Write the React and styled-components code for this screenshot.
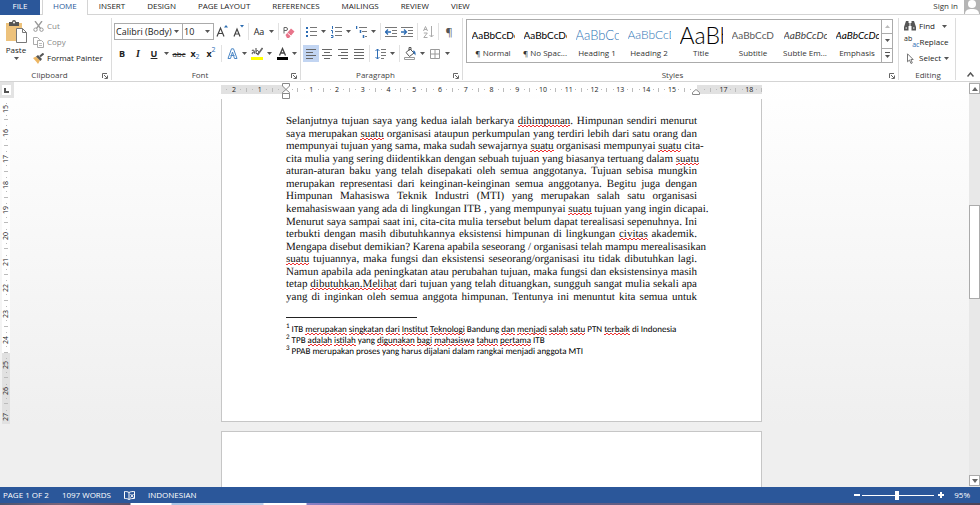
import React, { useState } from 'react';
import styled, { createGlobalStyle, css } from 'styled-components';

const tabs = ['HOME', 'INSERT', 'DESIGN', 'PAGE LAYOUT', 'REFERENCES', 'MAILINGS', 'REVIEW', 'VIEW'];

const styleList = [
  { name: '¶ Normal', sample: 'AaBbCcDc', kind: 'normal' },
  { name: '¶ No Spac...', sample: 'AaBbCcDc', kind: 'normal' },
  { name: 'Heading 1', sample: 'AaBbCc', kind: 'heading1' },
  { name: 'Heading 2', sample: 'AaBbCcD', kind: 'heading2' },
  { name: 'Title', sample: 'AaBb', kind: 'title' },
  { name: 'Subtitle', sample: 'AaBbCcD', kind: 'subtitle' },
  { name: 'Subtle Em...', sample: 'AaBbCcDc', kind: 'subtle' },
  { name: 'Emphasis', sample: 'AaBbCcDc', kind: 'emphasis' },
];

// words between underscores get the spelling underline
const bodyLines = [
  'Selanjutnya tujuan saya yang kedua ialah berkarya _dihimpunan_. Himpunan sendiri menurut',
  'saya merupakan _suatu_ organisasi ataupun perkumpulan yang terdiri lebih dari satu orang dan',
  'mempunyai tujuan yang sama, maka sudah sewajarnya _suatu_ organisasi mempunyai _suatu_ cita-',
  'cita mulia yang sering diidentikkan dengan sebuah tujuan yang biasanya tertuang dalam _suatu_',
  'aturan-aturan baku yang telah disepakati oleh semua anggotanya. Tujuan sebisa mungkin',
  'merupakan representasi dari keinginan-keinginan semua anggotanya. Begitu juga dengan',
  'Himpunan Mahasiswa Teknik Industri (MTI) yang merupakan salah satu organisasi',
  'kemahasiswaan yang ada di lingkungan ITB , yang mempunyai _suatu_ tujuan yang ingin dicapai.',
  'Menurut saya sampai saat ini, cita-cita mulia tersebut belum dapat terealisasi sepenuhnya. Ini',
  'terbukti dengan masih dibutuhkannya eksistensi himpunan di lingkungan _civitas_ akademik.',
  'Mengapa disebut demikian? Karena apabila seseorang / organisasi telah mampu merealisasikan',
  '_suatu_ tujuannya, maka fungsi dan eksistensi seseorang/organisasi itu tidak dibutuhkan lagi.',
  'Namun apabila ada peningkatan atau perubahan tujuan, maka fungsi dan eksistensinya masih',
  'tetap _dibutuhkan.Melihat_ dari tujuan yang telah dituangkan, sungguh sangat mulia sekali apa',
  'yang di inginkan oleh semua anggota himpunan. Tentunya ini menuntut kita semua untuk',
];

const notes = [
  'ITB _merupakan_ _singkatan_ _dari_ _Institut_ _Teknologi_ Bandung _dan_ _menjadi_ _salah_ _satu_ PTN _terbaik_ di Indonesia',
  'TPB _adalah_ _istilah_ yang _digunakan_ _bagi_ _mahasiswa_ _tahun_ _pertama_ ITB',
  'PPAB merupakan proses yang harus dijalani dalam rangkai menjadi anggota MTI',
];

const rulerMarks = Array.from({ length: 21 }, (_, i) => i - 2);
const sideMarks = Array.from({ length: 13 }, (_, i) => i + 15);

const Marked = ({ text }) =>
  text.split('_').map((part, i) => (i % 2 ? <Misspelt key={i}>{part}</Misspelt> : part));

const Svg = ({ w, h, children }) => (
  <svg width={w} height={h} viewBox={`0 0 ${w} ${h}`} fill="none" aria-hidden="true">
    {children}
  </svg>
);

const Caret = () => (
  <Svg w={5} h={3}>
    <path d="M0 0h5L2.5 3z" fill="#555" />
  </Svg>
);

const Launcher = ({ label }) => (
  <LaunchButton aria-label={label}>
    <Svg w={6} h={6}>
      <path d="M.5 5V.5H5M2 2l3 3M5.500 2.500v3h-3" stroke="#666" />
    </Svg>
  </LaunchButton>
);

const PasteIcon = () => (
  <Svg w={22} h={23}>
    <path d="M1 3h16v18H1z" fill="#edc27c" />
    <path d="M4 2h3a2 2 0 0 1 4 0h3v4H4z" fill="#555" />
    <circle cx="9" cy="2.500" r="1" fill="#fff" />
    <path d="M11.500 8.500h6l4 4v10h-10z" fill="#fff" stroke="#777" />
    <path d="M17.500 8.500v4h4" stroke="#777" />
  </Svg>
);

const CutIcon = () => (
  <Svg w={11} h={11}>
    <path d="M2 0l5.500 7.500M9 0L3.500 7.500" stroke="#999" strokeWidth="1.300" />
    <circle cx="2.500" cy="8.700" r="1.700" stroke="#999" />
    <circle cx="8.500" cy="8.700" r="1.700" stroke="#999" />
  </Svg>
);

const CopyIcon = () => (
  <Svg w={11} h={11}>
    <path d="M.5.5h4l2 2v5h-6z" fill="#fff" stroke="#aaa" />
    <path d="M4.500 3.500h4l2 2v5h-6z" fill="#fff" stroke="#aaa" />
    <path d="M6 6.500h3M6 8.500h3" stroke="#bbb" />
  </Svg>
);

const PainterIcon = () => (
  <Svg w={11} h={11}>
    <path d="M0 5l3-1.500 4 4L5 11 3.500 9z" fill="#edb662" />
    <path d="M3 3.500l2-1.500 4 4-1.500 2z" fill="#555" />
    <path d="M7 3.500L10.500.5" stroke="#555" strokeWidth="2" />
  </Svg>
);

const GrowIcon = ({ down }) => (
  <Svg w={12} h={13}>
    <path d={down ? 'M2 11.500L5 4l3 7.500M3.200 9h3.600' : 'M1 11.500L4.500 3 8 11.500M2.300 8.500h4.400'} stroke="#444" strokeWidth="1.200" />
    <path d={down ? 'M8 0h4l-2 2.500z' : 'M8 2.500h4L10 0z'} fill="#2b6cb0" />
  </Svg>
);

const EraserIcon = () => (
  <Svg w={12} h={12}>
    <path d="M1 7.500V1.500h2a1.500 1.500 0 0 1 0 3H1" stroke="#666" />
    <path d="M2.500 9L8 2.500 11.500 5.500 6 12H4z" fill="#e8748a" />
    <path d="M4.500 7l3.500 3" stroke="#fff" />
  </Svg>
);

const EffectIcon = () => (
  <Svg w={11} h={11}>
    <path d="M1 10.500L4.500.8h2L10 10.500H7.500L5.500 4 3.500 10.500z" stroke="#4a86c5" fill="#fff" strokeLinejoin="round" />
    <path d="M3.500 7.500h4" stroke="#4a86c5" />
  </Svg>
);

const MarkerIcon = () => (
  <Svg w={12} h={13}>
    <path d="M.8 3.500c2-1 2.500 0 2.500 1.200v2M3.300 5C.5 5 .5 7 2 6.800M5 1v5.500c2 .8 3-.5 2.500-2S6 3.500 5 4.500" stroke="#444" />
    <path d="M11.500 1L6.500 8" stroke="#666" strokeWidth="1.600" />
    <path d="M0 10h12v3H0z" fill="#ff0" />
  </Svg>
);

const FontColorIcon = () => (
  <Svg w={11} h={13}>
    <path d="M2.500 8.500l3-7 3 7M3.500 6h4" stroke="#444" strokeWidth="1.300" />
    <path d="M0 10h11v3H0z" fill="#000" />
  </Svg>
);

const ListIcon = ({ kind }) => (
  <Svg w={11} h={12}>
    {kind === 'bullet' && <path d="M0 1h2v2H0zM0 5h2v2H0zM0 9h2v2H0z" fill="#2e6db4" />}
    {kind === 'number' && <path d="M1.500 0v3M0 4.500h1.500v3M0 9.500h2v2H0" stroke="#2e6db4" />}
    {kind === 'level' && <path d="M.5 0v3M4.500 4v3M7.500 9v3" stroke="#2e6db4" strokeWidth="1.500" />}
    <path
      d={kind === 'level' ? 'M3 1.500h8M6 5.500h5M9 10.500h2' : 'M4 1.500h7M4 5.500h7M4 9.500h7'}
      stroke="#777"
    />
  </Svg>
);

const IndentIcon = ({ out }) => (
  <Svg w={12} h={10}>
    <path d="M0 .5h12M7 3.500h5M7 6.500h5M0 9.500h12" stroke="#777" />
    <path d={out ? 'M0 5h6M3 2.500L.5 5 3 7.500' : 'M0 5h5M3 2.500L5.500 5 3 7.500'} stroke="#2e6db4" strokeWidth="1.300" />
  </Svg>
);

const SortIcon = () => (
  <Svg w={11} h={12}>
    <path d="M.5 5L2.500.5 4.500 5M1 3.500h3M.8 7h3.500L.8 11.500h3.700" stroke="#aaa" />
    <path d="M8.500 0v11M6.500 9l2 2 2-2" stroke="#aaa" />
  </Svg>
);

const alignPaths = {
  left: 'M0 .5h10M0 3.500h7M0 6.500h10M0 9.500h7',
  center: 'M0 .5h10M2 3.500h6M0 6.500h10M2 9.500h6',
  right: 'M0 .5h10M3 3.500h7M0 6.500h10M3 9.500h7',
  justify: 'M0 .5h10M0 3.500h10M0 6.500h10M0 9.500h10',
};

const AlignIcon = ({ side }) => (
  <Svg w={10} h={10}>
    <path d={alignPaths[side]} stroke="#666" />
  </Svg>
);

const SpacingIcon = () => (
  <Svg w={11} h={12}>
    <path d="M2.500 1v10M.5 3l2-2 2 2M.5 9l2 2 2-2" stroke="#2e6db4" />
    <path d="M6 1.500h5M6 4.500h5M6 7.500h5M6 10.500h3" stroke="#777" />
  </Svg>
);

const BucketIcon = () => (
  <Svg w={13} h={13}>
    <path d="M2 5.500L6 2l4 4-4.500 3.500z" stroke="#555" fill="#fff" />
    <path d="M5 4V.5h2V3" stroke="#555" />
    <path d="M9 3.500c2 0 3 1.500 2.500 5L9.500 6z" fill="#2e6db4" />
    <path d="M.5 10.500h10v2H.5z" stroke="#999" fill="#fff" />
  </Svg>
);

const BorderIcon = () => (
  <Svg w={10} h={10}>
    <path d="M.5.5h9v9h-9zM5 1v8M1 5h8" stroke="#999" />
  </Svg>
);

const FindIcon = () => (
  <Svg w={12} h={10}>
    <path d="M2 0h2.500v2H7.500V0H10l2 6v3.500H7.500V5h-3v4.500H0V6z" fill="#555" />
    <path d="M1.500 7h1.500M9 7h1.500M6 2v3" stroke="#fff" />
  </Svg>
);

const SelectIcon = () => (
  <Svg w={8} h={11}>
    <path d="M1.500.8v8l2-1.800 1.500 3.500 1.300-.6L4.900 6.500h2.300z" fill="#fff" stroke="#777" />
  </Svg>
);

const ReplaceIcon = () => (
  <ReplaceBox>
    <span>ab</span>
    <em>ac</em>
  </ReplaceBox>
);

const ProofIcon = () => (
  <Svg w={11} h={9}>
    <path d="M5 1.500C3.500.5 2 .5.5.5v7c1.500 0 3 0 4.500 1zM5 1.500C6.500.5 9 .5 10.500.5v7c-2 0-4 0-5.500 1" stroke="#fff" />
    <path d="M6.500 3l3 3.500M9.500 3l-3 3.500" stroke="#fff" />
  </Svg>
);

const IndentMarker = () => (
  <LeftMarker>
    <Svg w={8} h={16}>
      <path d="M.5.5h7v2.500L4 6.500.5 3zM.5 10.500v-1L4 6.500l3.500 3v1zM.5 10.500h7v5h-7z" fill="#fff" stroke="#888" />
    </Svg>
  </LeftMarker>
);

const Split = ({ label, children }) => (
  <Tool $split aria-label={label}>
    <Glyph>{children}</Glyph>
    <Caret />
  </Tool>
);

const App = () => {
  const [font, setFont] = useState('Calibri (Body)');
  const [size, setSize] = useState('10');
  const [align, setAlign] = useState('left');
  const [zoom, setZoom] = useState(95);

  return (
    <Window>
      <GlobalStyle />
      <TabStrip>
        <FileTab>FILE</FileTab>
        {tabs.map((tab) => (
          <Tab key={tab} $active={tab === 'HOME'}>{tab}</Tab>
        ))}
        <SignIn href="#signin">Sign in</SignIn>
        <Avatar>
          <Svg w={16} h={14}>
            <circle cx="8" cy="4" r="4" fill="#fff" />
            <path d="M1 14c0-4 3-5 7-5s7 1 7 5z" fill="#fff" />
          </Svg>
        </Avatar>
      </TabStrip>

      <Ribbon>
        <Group $width={112}>
          <ClipboardTools>
            <PasteButton>
              <PasteIcon />
              Paste
              <Caret />
            </PasteButton>
            <Stack>
              <TextTool $muted><CutIcon />Cut</TextTool>
              <TextTool $muted><CopyIcon />Copy</TextTool>
              <TextTool><PainterIcon />Format Painter</TextTool>
            </Stack>
          </ClipboardTools>
          <GroupLabel>Clipboard</GroupLabel>
          <Launcher label="Clipboard options" />
        </Group>

        <Group $width={189}>
          <ToolRows>
            <ToolRow>
              <SelectBox $width={69}>
                <Select aria-label="Font" value={font} onChange={(e) => setFont(e.target.value)}>
                  <option>Calibri (Body)</option>
                  <option>Times New Roman</option>
                </Select>
                <Caret />
              </SelectBox>
              <SelectBox $width={31}>
                <Select aria-label="Font size" value={size} onChange={(e) => setSize(e.target.value)}>
                  <option>10</option>
                  <option>12</option>
                </Select>
                <Caret />
              </SelectBox>
              <Tool aria-label="Grow font"><GrowIcon /></Tool>
              <Tool aria-label="Shrink font"><GrowIcon down /></Tool>
              <Divider />
              <Split label="Change case">Aa</Split>
              <Divider />
              <Tool aria-label="Clear formatting"><EraserIcon /></Tool>
            </ToolRow>
            <ToolRow>
              <Tool><b>B</b></Tool>
              <Tool><Italic>I</Italic></Tool>
              <Split label="Underline"><Underlined>U</Underlined></Split>
              <Tool><Struck>abc</Struck></Tool>
              <Tool><b>x</b><Sub>2</Sub></Tool>
              <Tool><b>x</b><Sup>2</Sup></Tool>
              <Divider />
              <Split label="Text effects"><EffectIcon /></Split>
              <Split label="Highlight"><MarkerIcon /></Split>
              <Split label="Font colour"><FontColorIcon /></Split>
            </ToolRow>
          </ToolRows>
          <GroupLabel>Font</GroupLabel>
          <Launcher label="Font options" />
        </Group>

        <Group $width={162}>
          <ToolRows>
            <ToolRow>
              <Split label="Bullets"><ListIcon kind="bullet" /></Split>
              <Split label="Numbering"><ListIcon kind="number" /></Split>
              <Split label="Multilevel list"><ListIcon kind="level" /></Split>
              <Divider />
              <Tool aria-label="Decrease indent"><IndentIcon out /></Tool>
              <Tool aria-label="Increase indent"><IndentIcon /></Tool>
              <Divider />
              <Tool aria-label="Sort"><SortIcon /></Tool>
              <Divider />
              <Tool><Pilcrow>¶</Pilcrow></Tool>
            </ToolRow>
            <ToolRow>
              {Object.keys(alignPaths).map((side) => (
                <Tool key={side} aria-label={side} $on={align === side} onClick={() => setAlign(side)}>
                  <AlignIcon side={side} />
                </Tool>
              ))}
              <Divider />
              <Split label="Line spacing"><SpacingIcon /></Split>
              <Divider />
              <Split label="Shading"><BucketIcon /></Split>
              <Split label="Borders"><BorderIcon /></Split>
            </ToolRow>
          </ToolRows>
          <GroupLabel>Paragraph</GroupLabel>
          <Launcher label="Paragraph options" />
        </Group>

        <StylesGroup>
          <Gallery>
            <GalleryItems>
              {styleList.map((item) => (
                <StyleItem key={item.name}>
                  <Sample $kind={item.kind}>{item.sample}</Sample>
                  <StyleName>{item.name}</StyleName>
                </StyleItem>
              ))}
            </GalleryItems>
            <GalleryScroll>
              <ScrollStep aria-label="Previous styles"><Svg w={5} h={3}><path d="M0 3h5L2.500 0z" fill="#bbb" /></Svg></ScrollStep>
              <ScrollStep aria-label="Next styles"><Caret /></ScrollStep>
              <ScrollStep aria-label="More styles">
                <Svg w={5} h={6}><path d="M0 .5h5" stroke="#555" /><path d="M0 3h5L2.500 6z" fill="#555" /></Svg>
              </ScrollStep>
            </GalleryScroll>
          </Gallery>
          <GroupLabel>Styles</GroupLabel>
          <Launcher label="Styles options" />
        </StylesGroup>

        <Group $width={57}>
          <Stack>
            <TextTool><FindIcon />Find<CaretGap><Caret /></CaretGap></TextTool>
            <TextTool $tight><ReplaceIcon />Replace</TextTool>
            <TextTool><IconSlot><SelectIcon /></IconSlot>Select<Caret /></TextTool>
          </Stack>
          <GroupLabel $plain>Editing</GroupLabel>
        </Group>
        <Collapse aria-label="Collapse the ribbon">
          <Svg w={7} h={5}><path d="M.5 4.500l3-3.500 3 3.500" stroke="#555" strokeWidth="1.500" /></Svg>
        </Collapse>
      </Ribbon>

      <Workspace>
        <SideColumn>
          <TabSelector aria-label="Tab stop">
            <Svg w={5} h={5}><path d="M1 0v4h4" stroke="#555" strokeWidth="2" /></Svg>
          </TabSelector>
          <SideRuler>
            <SideScale>
              {sideMarks.map((mark) => (
                <SideCell key={mark} $margin={mark > 24}><span>{mark}</span></SideCell>
              ))}
            </SideScale>
          </SideRuler>
        </SideColumn>

        <Canvas>
          <Ruler>
            {rulerMarks.map((mark) => (
              <RulerCell key={mark}>{mark === 0 || mark === 16 ? '' : Math.abs(mark)}</RulerCell>
            ))}
            <IndentMarker />
            <RightMarker>
              <Svg w={8} h={6}><path d="M.5 5.500V3.500L4 .5l3.500 3v2z" fill="#fff" stroke="#888" /></Svg>
            </RightMarker>
          </Ruler>
          <Pages>
            <Paper>
              <Body>
                {bodyLines.map((line) => (
                  <Line key={line}><Marked text={line} /></Line>
                ))}
              </Body>
              <NoteRule />
              <Notes>
                {notes.map((note, index) => (
                  <Note key={note}><NoteNumber>{index + 1}</NoteNumber> <Marked text={note} /></Note>
                ))}
              </Notes>
            </Paper>
            <NextPaper />
          </Pages>
        </Canvas>

        <Scrollbar>
          <ArrowButton aria-label="Scroll up"><Svg w={6} h={4}><path d="M0 4h6L3 0z" fill="#666" /></Svg></ArrowButton>
          <Track><Thumb /></Track>
          <ArrowButton aria-label="Scroll down"><Svg w={6} h={4}><path d="M0 0h6L3 4z" fill="#666" /></Svg></ArrowButton>
        </Scrollbar>
      </Workspace>

      <StatusBar>
        <span>PAGE 1 OF 2</span>
        <span>1097 WORDS</span>
        <ProofIcon />
        <span>INDONESIAN</span>
        <ZoomArea>
          <ZoomButton aria-label="Zoom out" onClick={() => setZoom(zoom - 5)}>
            <Svg w={6} h={6}><path d="M0 3h6" stroke="#fff" strokeWidth="2" /></Svg>
          </ZoomButton>
          <ZoomSlider
            type="range"
            aria-label="Zoom"
            min="0"
            max="200"
            value={zoom}
            onChange={(e) => setZoom(Number(e.target.value))}
          />
          <ZoomButton aria-label="Zoom in" onClick={() => setZoom(zoom + 5)}>
            <Svg w={6} h={6}><path d="M0 3h6M3 0v6" stroke="#fff" strokeWidth="2" /></Svg>
          </ZoomButton>
          <ZoomValue>{zoom}%</ZoomValue>
        </ZoomArea>
      </StatusBar>
      <Taskbar />
    </Window>
  );
};

const GlobalStyle = createGlobalStyle`
  * {
    box-sizing: border-box;
  }

  body {
    margin: 0;
    overflow: hidden;
  }

  button, select {
    margin: 0;
    padding: 0;
    border: none;
    background: none;
    color: inherit;
    font: inherit;
  }

  svg {
    display: block;
    flex: none;
  }
`;

const Window = styled.div`
  display: flex;
  flex-direction: column;
  height: 100vh;
  background: #fff;
  color: #222;
  font-family: 'Open Sans', 'Noto Sans', sans-serif;
  font-size: 8px;
  line-height: 10px;
  white-space: nowrap;
`;

const TabStrip = styled.nav`
  display: flex;
  height: 15px;
  border-bottom: 1px solid #d4d4d4;
`;

const FileTab = styled.button`
  width: 40px;
  height: 15px;
  padding-bottom: 3px;
  margin-right: 2px;
  background: #2b579a;
  color: #fff;
`;

const Tab = styled.button`
  height: 15px;
  padding: 0 10px 3px;
  border: solid transparent;
  border-width: 0 1px;
  ${({ $active }) => $active && css`
    background: #fff;
    border-color: #d4d4d4;
    color: #2b579a;
  `}
`;

const SignIn = styled.a`
  margin-left: auto;
  padding-top: 1px;
  color: #333;
  text-decoration: none;
`;

const Avatar = styled.div`
  width: 16px;
  margin-left: 6px;
  background: #b5b5b5;
  overflow: hidden;
`;

const Ribbon = styled.div`
  display: flex;
  height: 67px;
  border-bottom: 1px solid #d4d4d4;
`;

const Group = styled.section`
  position: relative;
  display: flex;
  flex-direction: column;
  flex: none;
  width: ${({ $width }) => $width}px;
  margin: 3px 0 1px;
  padding-left: 2px;
  border-right: 1px solid #dcdcdc;
`;

const StylesGroup = styled(Group)`
  flex: 1;
  width: auto;
  min-width: 0;
  padding: 0 5px 0 3px;
`;

const GroupLabel = styled.div`
  margin-top: auto;
  padding-right: ${({ $plain }) => ($plain ? 0 : 14)}px;
  text-align: center;
  color: #444;
`;

const LaunchButton = styled.button`
  position: absolute;
  right: 3px;
  bottom: 1px;
`;

const ClipboardTools = styled.div`
  display: flex;
`;

const PasteButton = styled.button`
  display: flex;
  flex-direction: column;
  align-items: center;
  gap: 2px;
  width: 28px;
  padding-top: 2px;
`;

const Stack = styled.div`
  display: flex;
  flex-direction: column;
  align-items: flex-start;
  padding-left: 3px;
`;

const TextTool = styled.button`
  display: flex;
  align-items: center;
  gap: ${({ $tight }) => ($tight ? 0 : 3)}px;
  height: 16px;
  color: ${({ $muted }) => ($muted ? '#888' : 'inherit')};
`;

const CaretGap = styled.span`
  padding-left: 4px;
`;

const IconSlot = styled.span`
  display: flex;
  justify-content: center;
  width: 12px;
`;

const ReplaceBox = styled.span`
  display: flex;
  height: 14px;
  font-size: 7px;
  line-height: 8px;

  em {
    align-self: flex-end;
    color: #2e6db4;
    font-style: normal;
  }
`;

const ToolRows = styled.div`
  display: flex;
  flex-direction: column;
  gap: 5px;
  padding-top: 5px;
`;

const ToolRow = styled.div`
  display: flex;
  height: 17px;
`;

const Tool = styled.button`
  display: flex;
  align-items: center;
  justify-content: ${({ $split }) => ($split ? 'flex-start' : 'center')};
  flex: none;
  width: ${({ $split }) => ($split ? 25 : 16)}px;
  background: ${({ $on }) => ($on ? '#c2d5f2' : 'none')};
  font-size: 9px;
`;

const Glyph = styled.span`
  display: flex;
  justify-content: center;
  width: 16px;
  margin-right: 2px;
`;

const Divider = styled.span`
  flex: none;
  width: 1px;
  margin: 0 2px;
  background: #e1e1e1;
`;

const SelectBox = styled.span`
  display: flex;
  align-items: center;
  flex: none;
  width: ${({ $width }) => $width}px;
  padding: 0 3px 0 1px;
  border: 1px solid #ababab;

  & + & {
    border-left: none;
  }
`;

const Select = styled.select`
  flex: 1;
  min-width: 0;
  appearance: none;
  font-size: 9px;
  color: #222;
`;

const Italic = styled.i`
  font-family: 'Liberation Serif', serif;
  font-weight: bold;
  font-size: 10px;
`;

const Underlined = styled.b`
  text-decoration: underline;
`;

const Struck = styled.span`
  font-size: 8px;
  text-decoration: line-through;
`;

const Sub = styled.sub`
  align-self: flex-end;
  font-size: 7px;
  color: #2e6db4;
`;

const Sup = styled.sup`
  align-self: flex-start;
  font-size: 7px;
  color: #2e6db4;
`;

const Pilcrow = styled.span`
  font-size: 11px;
  color: #555;
`;

const Gallery = styled.div`
  display: flex;
  height: 44px;
  margin-top: 1px;
  border: 1px solid #ababab;
`;

const GalleryItems = styled.div`
  display: flex;
  flex: 1;
  min-width: 0;
  overflow: hidden;
`;

const StyleItem = styled.button`
  display: flex;
  flex-direction: column;
  align-items: center;
  flex: none;
  width: 52px;
  padding-top: 2px;
`;

const sampleKinds = {
  normal: css`
    color: #000;
  `,
  heading1: css`
    color: #2e74b5;
    font-weight: 300;
    font-size: 13px;
  `,
  heading2: css`
    color: #2e74b5;
    font-weight: 300;
    font-size: 12px;
  `,
  title: css`
    color: #000;
    font-weight: 300;
    font-size: 23px;
  `,
  subtitle: css`
    color: #5a5a5a;
    font-size: 10px;
  `,
  subtle: css`
    color: #404040;
    font-style: italic;
  `,
  emphasis: css`
    color: #000;
    font-style: italic;
  `,
};

const Sample = styled.span`
  width: 43px;
  overflow: hidden;
  font-family: Lato, sans-serif;
  font-size: 10px;
  line-height: 26px;
  text-align: left;
  ${({ $kind }) => sampleKinds[$kind]}
`;

const StyleName = styled.span`
  color: #333;
`;

const GalleryScroll = styled.div`
  display: flex;
  flex-direction: column;
  width: 11px;
  border-left: 1px solid #ababab;
`;

const ScrollStep = styled.button`
  display: flex;
  align-items: center;
  justify-content: center;
  flex: 1;

  & + & {
    border-top: 1px solid #ababab;
  }
`;

const Collapse = styled.button`
  display: flex;
  align-items: flex-end;
  justify-content: center;
  width: 24px;
  padding: 0 0 4px 4px;
`;

const Workspace = styled.main`
  display: flex;
  flex: 1;
  min-height: 0;
  background: linear-gradient(#fff, #efefef 85%);
`;

const SideColumn = styled.div`
  display: flex;
  flex-direction: column;
  width: 14px;
`;

const TabSelector = styled.button`
  display: flex;
  align-items: center;
  justify-content: center;
  height: 16px;
  border: 2px solid #e3e3e3;
  border-width: 3px 3px 3px 2px;
  background: #fff;
`;

const SideRuler = styled.div`
  width: 8px;
  height: 325px;
  margin: 1px 0 0 2px;
  overflow: hidden;
`;

const SideScale = styled.div`
  display: grid;
  grid-template-rows: 21px repeat(12, 1fr);
  height: 331px;
`;

const SideCell = styled.div`
  display: flex;
  align-items: center;
  justify-content: center;
  background:
    linear-gradient(#bbb, #bbb) 50% 100% / 4px 1px no-repeat,
    linear-gradient(#bbb, #bbb) 50% 22% / 1px 1px no-repeat,
    linear-gradient(#bbb, #bbb) 50% 78% / 1px 1px no-repeat,
    ${({ $margin }) => ($margin ? '#e1e1e1' : '#fff')};

  span {
    writing-mode: vertical-rl;
    transform: rotate(180deg);
    font-size: 7px;
    line-height: 8px;
  }
`;

const Canvas = styled.div`
  display: flex;
  flex-direction: column;
  align-items: center;
  flex: 1;
  min-width: 0;
`;

const Ruler = styled.div`
  position: relative;
  display: flex;
  width: 541px;
  height: 9px;
  margin: 3px 0 5px;
  background: linear-gradient(90deg, #e1e1e1 66px, #fff 66px, #fff 476px, #e1e1e1 476px);
`;

const RulerCell = styled.span`
  flex: 1;
  font-size: 7px;
  line-height: 9px;
  text-align: center;
  background:
    linear-gradient(#bbb, #bbb) 100% 50% / 1px 4px no-repeat,
    linear-gradient(#bbb, #bbb) 22% 50% / 1px 1px no-repeat,
    linear-gradient(#bbb, #bbb) 78% 50% / 1px 1px no-repeat;
`;

const LeftMarker = styled.span`
  position: absolute;
  left: 61px;
  top: -2px;
`;

const RightMarker = styled.span`
  position: absolute;
  left: 471px;
  bottom: -1px;
`;

const Pages = styled.div`
  flex: 1;
  width: 541px;
  overflow: hidden;
`;

const Paper = styled.article`
  height: 323px;
  padding: 16px 64px 0;
  background: #fff;
  border: 1px solid #c6c6c6;
  border-top: none;
  color: #111;
  text-rendering: geometricPrecision;
`;

const NextPaper = styled.article`
  height: 700px;
  margin-top: 9px;
  background: #fff;
  border: 1px solid #c6c6c6;
`;

const Body = styled.div`
  display: flex;
  flex-direction: column;
  justify-content: space-between;
  height: 188px;
  font-family: 'Liberation Serif', serif;
  font-size: 11px;
`;

const Line = styled.div`
  line-height: 12px;
  text-align: justify;
  text-align-last: justify;
`;

const Misspelt = styled.span`
  background:
    linear-gradient(90deg, #e33 50%, transparent 50%) 0 100% / 4px 1px repeat-x,
    linear-gradient(90deg, transparent 50%, #e33 50%) 0 calc(100% - 1px) / 4px 1px repeat-x;
`;

const NoteRule = styled.hr`
  width: 131px;
  height: 1px;
  margin: 14px 0 5px;
  border: none;
  background: #222;
`;

const Notes = styled.div`
  font-family: Carlito, Lato, sans-serif;
  font-size: 9px;
  line-height: 11px;
  color: #000;
`;

const Note = styled.div`
  height: 11px;
`;

const NoteNumber = styled.sup`
  font-size: 7px;
  line-height: 6px;
`;

const Scrollbar = styled.div`
  display: flex;
  flex-direction: column;
  width: 11px;
  padding: 1px 0;
  background: #e8e8e8;
`;

const ArrowButton = styled.button`
  display: flex;
  align-items: center;
  justify-content: center;
  height: 11px;
  border: 1px solid #ababab;
  background: #fff;
`;

const Track = styled.div`
  flex: 1;
  padding-top: 111px;
`;

const Thumb = styled.div`
  height: 94px;
  background: #fff;
  border: 1px solid #ababab;
`;

const StatusBar = styled.footer`
  display: flex;
  align-items: center;
  gap: 13px;
  height: 16px;
  padding: 0 10px 0 3px;
  background: #2b579a;
  color: #fff;
`;

const ZoomArea = styled.div`
  display: flex;
  align-items: center;
  gap: 2px;
  margin-left: auto;
`;

const ZoomButton = styled.button`
  display: flex;
`;

const ZoomSlider = styled.input`
  width: 72px;
  height: 9px;
  margin: 0 2px 0 0;
  appearance: none;
  background: linear-gradient(#fff, #fff) 0 4px / 100% 1px no-repeat;

  &::-webkit-slider-thumb {
    appearance: none;
    width: 4px;
    height: 9px;
    background: #fff;
  }
`;

const ZoomValue = styled.span`
  padding-left: 8px;
`;

const Taskbar = styled.div`
  height: 2px;
  background: linear-gradient(90deg, #4a5570, #7a6478 60px, #5a5068 130px, #fff 131px, #fff 171px, #a9c4e4 172px, #b9cdea 263px, #fff 264px, #fff 306px, #8a80c4 307px, #5a5c90 50%, #6a6078 75%, #4c4458);
`;

export default App;
